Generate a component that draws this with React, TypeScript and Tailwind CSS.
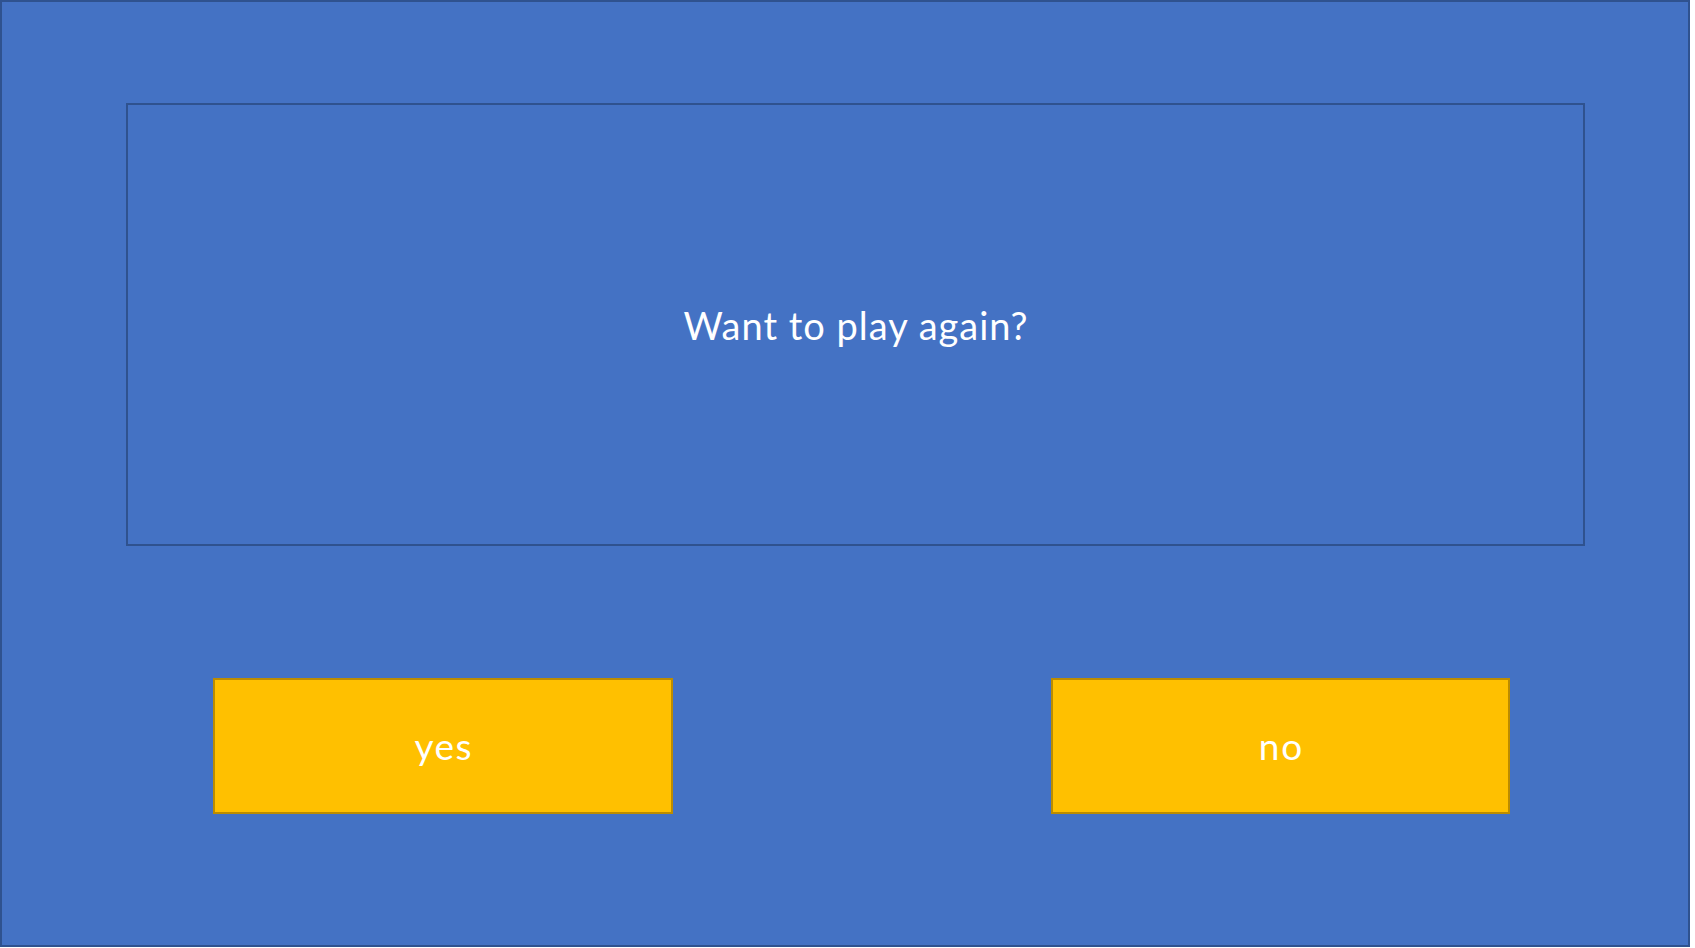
import React from "react";

export default function App() {
  return (
    <div className="w-[1695px] h-[948px] bg-white" style={{ fontFamily: "Lato, 'Open Sans', sans-serif" }}>
      <div className="w-[1690px] h-[947px] border-2 border-[#2f528f] bg-[#4472c4] pl-[124px] pt-[101px] flex flex-col">
        <div className="w-[1459px] h-[443px] border-2 border-[#2f528f] flex items-center justify-center">
          <span className="text-white text-[38px] leading-none tracking-[1px] pl-[1px]">Want to play again?</span>
        </div>
        <div className="flex mt-[132px] ml-[87px] gap-[378px]">
          <div className="w-[460px] h-[136px] bg-[#ffc000] border-2 border-[#bc8c00] flex items-center justify-center">
            <span className="text-white text-[37px] leading-none tracking-[1.5px] pl-[1.5px] pb-[2px]">yes</span>
          </div>
          <div className="w-[459px] h-[136px] bg-[#ffc000] border-2 border-[#bc8c00] flex items-center justify-center">
            <span className="text-white text-[37px] leading-none tracking-[2px] pl-[2px] pb-[2px]">no</span>
          </div>
        </div>
      </div>
    </div>
  );
}
